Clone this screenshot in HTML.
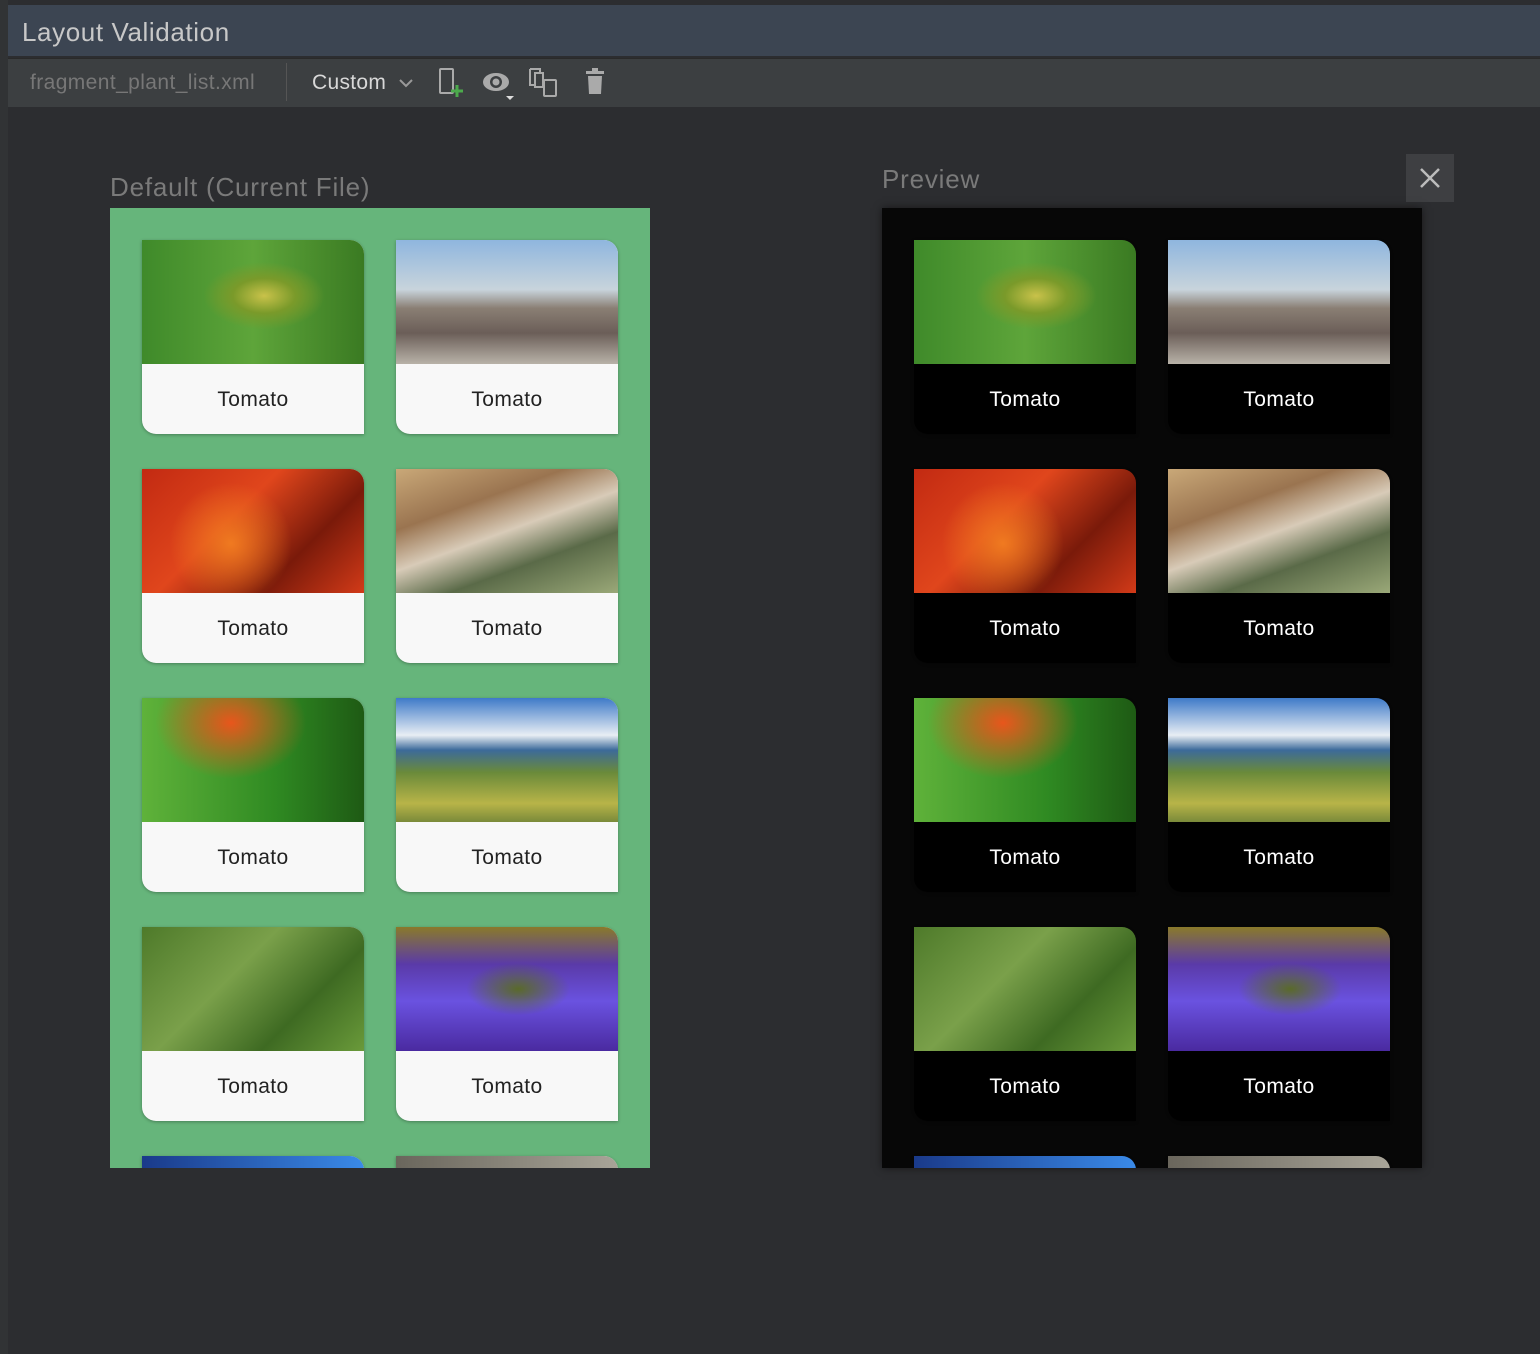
<!DOCTYPE html>
<html><head><style>
*{margin:0;padding:0;box-sizing:border-box}
body{width:1540px;height:1354px;background:#2c2d30;font-family:"Liberation Sans",sans-serif;position:relative;overflow:hidden}
.abs{position:absolute}
#strip{left:0;top:0;width:8px;height:1354px;background:#313335}
#title{left:8px;top:5px;width:1532px;height:51px;background:#3c4552;color:#c8c8c8;font-size:26px;letter-spacing:0.6px;padding:12px 0 0 14px}
#tool{left:8px;top:58px;width:1532px;height:49px;background:#3c3f41;border-top:1px solid #2a2a2a}
.panel{top:208px;width:540px;height:960px;overflow:hidden}
.card{position:absolute;width:222px;height:194px;border-radius:0 14px 0 14px;overflow:hidden;box-shadow:0 1px 3px rgba(0,0,0,.3)}
.card .im{height:124px}
.card .t{height:70px;text-align:center;font-size:21px;letter-spacing:0.4px;line-height:72px}
.L .card{background:#f8f8f8;color:#222}
.R .card{background:#000;color:#fff}
.i1{background:radial-gradient(ellipse at 55% 45%,#c9c24a 0,#7a9a2a 18%,transparent 35%),linear-gradient(90deg,#3f8a2a,#5ea53a 50%,#3a7a22)}
.i2{background:linear-gradient(180deg,#8fb6de 0,#c8d4dc 40%,#8a7f74 55%,#6b5e58 75%,#b8b2a8 100%)}
.i3{background:radial-gradient(circle at 40% 60%,#f07a20,transparent 40%),linear-gradient(135deg,#c22a12,#e0461c 40%,#7a1a0a 70%,#d23a18)}
.i4{background:linear-gradient(160deg,#c9a878 0,#9a7450 30%,#d8cbb8 50%,#5a6a48 70%,#9aa878 100%)}
.i5{background:radial-gradient(ellipse at 40% 20%,#e8561c,transparent 40%),linear-gradient(90deg,#5fb23a,#2f8a22 60%,#1e5a14)}
.i6{background:linear-gradient(180deg,#3e7ac8 0,#e8eef4 30%,#3c6a9a 42%,#6a8a3a 60%,#b8b448 85%,#7a8a3a)}
.i7{background:linear-gradient(135deg,#4e7a2a,#7aa04a 40%,#3e6a22 70%,#6a9a3a)}
.i8{background:radial-gradient(ellipse at 55% 50%,#5a6a2a,transparent 30%),linear-gradient(180deg,#8a7a2a 0,#5a3aa8 30%,#6a52e0 60%,#4a2aa0)}
.i9{background:linear-gradient(90deg,#1a3a8a,#3a8ae8)}
.i10{background:linear-gradient(90deg,#6a665c,#a8a498)}
.h{color:#7a7a7a;font-size:26px;letter-spacing:0.8px}
</style></head><body>
<div id="strip" class="abs"></div>
<div id="title" class="abs">Layout Validation</div>
<div id="tool" class="abs">
 <div class="abs" style="left:22px;top:12px;color:#777;font-size:21px;letter-spacing:0.4px">fragment_plant_list.xml</div>
 <div class="abs" style="left:278px;top:4px;width:1px;height:38px;background:#555"></div>
 <div class="abs" style="left:304px;top:12px;color:#d8d8d8;font-size:21px;letter-spacing:0.3px">Custom</div>
 <svg class="abs" style="left:390px;top:18px" width="16" height="12"><path d="M2 3l6 6 6-6" stroke="#999" stroke-width="2" fill="none"/></svg>
 <svg class="abs" style="left:430px;top:8px" width="28" height="32"><rect x="2" y="2" width="13" height="24" rx="1" stroke="#aaa" stroke-width="2" fill="none"/><path d="M19 18v12M13 24h12" stroke="#4caa4c" stroke-width="3"/></svg>
 <svg class="abs" style="left:472px;top:10px" width="40" height="34"><ellipse cx="16" cy="13" rx="13" ry="9" fill="#aaa"/><circle cx="16" cy="13" r="6" fill="#3c3f41"/><circle cx="16" cy="13" r="3.5" fill="#aaa"/><path d="M26 27h8l-4 4z" fill="#ddd"/></svg>
 <svg class="abs" style="left:520px;top:8px" width="32" height="32"><path d="M2 2h10v4M2 2v16h5" stroke="#aaa" stroke-width="2" fill="none"/><rect x="7" y="6" width="8" height="14" stroke="#aaa" stroke-width="2" fill="none"/><rect x="16" y="13" width="12" height="16" rx="1" stroke="#aaa" stroke-width="2" fill="none"/></svg>
 <svg class="abs" style="left:576px;top:8px" width="24" height="30"><rect x="2" y="4" width="18" height="3" fill="#aaa"/><rect x="8" y="1" width="6" height="4" fill="#aaa"/><path d="M4 9h14l-1 18H5z" fill="#aaa"/></svg>
</div>
<div class="abs h" style="left:110px;top:172px">Default (Current File)</div>
<div class="abs h" style="left:882px;top:164px">Preview</div>
<div class="abs" style="left:1406px;top:154px;width:48px;height:48px;background:#3e3f42"><svg width="48" height="48"><path d="M15 15l18 18M33 15l-18 18" stroke="#bbb" stroke-width="2.5"/></svg></div>

<div class="abs panel L" style="left:110px;background:#66b57b">
<div class="card" style="left:32px;top:32px"><div class="im i1"></div><div class="t">Tomato</div></div>
<div class="card" style="left:286px;top:32px"><div class="im i2"></div><div class="t">Tomato</div></div>
<div class="card" style="left:32px;top:261px"><div class="im i3"></div><div class="t">Tomato</div></div>
<div class="card" style="left:286px;top:261px"><div class="im i4"></div><div class="t">Tomato</div></div>
<div class="card" style="left:32px;top:490px"><div class="im i5"></div><div class="t">Tomato</div></div>
<div class="card" style="left:286px;top:490px"><div class="im i6"></div><div class="t">Tomato</div></div>
<div class="card" style="left:32px;top:719px"><div class="im i7"></div><div class="t">Tomato</div></div>
<div class="card" style="left:286px;top:719px"><div class="im i8"></div><div class="t">Tomato</div></div>
<div class="card" style="left:32px;top:948px"><div class="im i9"></div></div>
<div class="card" style="left:286px;top:948px"><div class="im i10"></div></div>
</div>

<div class="abs panel R" style="left:882px;background:#070707;box-shadow:0 0 8px rgba(0,0,0,.5)">
<div class="card" style="left:32px;top:32px"><div class="im i1"></div><div class="t">Tomato</div></div>
<div class="card" style="left:286px;top:32px"><div class="im i2"></div><div class="t">Tomato</div></div>
<div class="card" style="left:32px;top:261px"><div class="im i3"></div><div class="t">Tomato</div></div>
<div class="card" style="left:286px;top:261px"><div class="im i4"></div><div class="t">Tomato</div></div>
<div class="card" style="left:32px;top:490px"><div class="im i5"></div><div class="t">Tomato</div></div>
<div class="card" style="left:286px;top:490px"><div class="im i6"></div><div class="t">Tomato</div></div>
<div class="card" style="left:32px;top:719px"><div class="im i7"></div><div class="t">Tomato</div></div>
<div class="card" style="left:286px;top:719px"><div class="im i8"></div><div class="t">Tomato</div></div>
<div class="card" style="left:32px;top:948px"><div class="im i9"></div></div>
<div class="card" style="left:286px;top:948px"><div class="im i10"></div></div>
</div>
</body></html>
